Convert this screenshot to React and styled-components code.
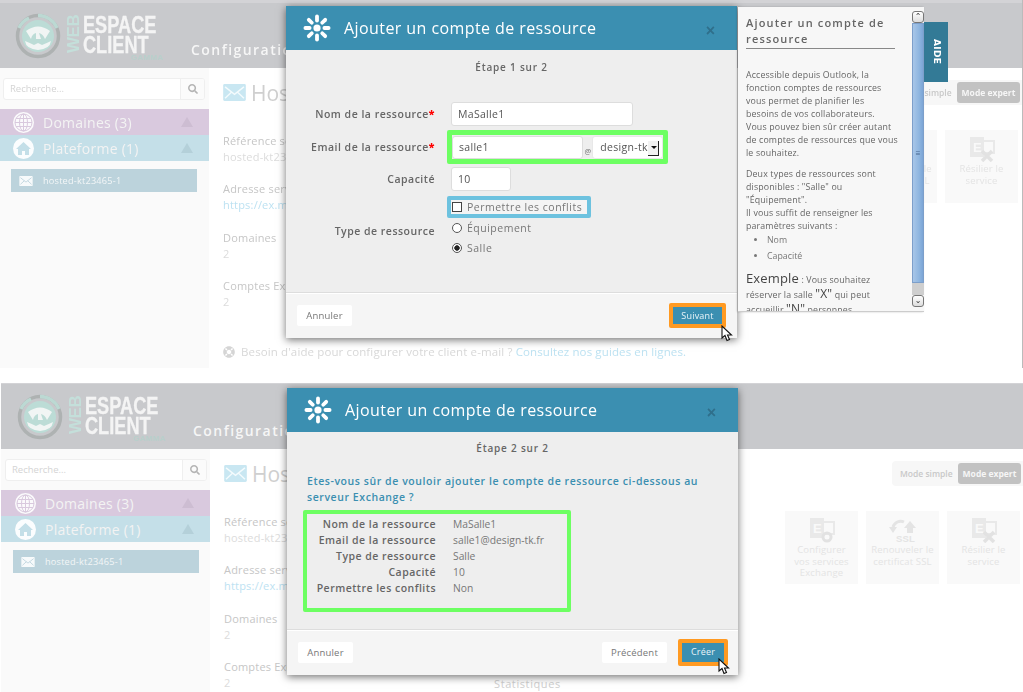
import React from 'react';
import styled, { createGlobalStyle } from 'styled-components';
import { FaSearch, FaLifeRing } from 'react-icons/fa';

const Global = createGlobalStyle`
  html, body { margin: 0; padding: 0; background: #fff; width: 1023px; height: 692px; overflow: hidden; }
  body { font-family: "Open Sans", "Noto Sans", sans-serif; }
  * { box-sizing: border-box; }
`;

const Page = styled.div`display: flex; flex-direction: column; gap: 15px; width: 1023px;`;
const Screen = styled.section`
  --shift: ${p => p.$shift}px;
  position: relative; overflow: hidden; width: 1023px; height: ${p => p.$h}px;
  padding-left: var(--shift); background: #fff; filter: blur(0.3px);
  display: flex; flex-direction: column;
  ${p => p.$edge ? 'border-right: 1px solid #bbb;' : ''}
`;
const Header = styled.header`
  flex: none; height: ${p => p.$strip + 65}px; border-top: ${p => p.$strip}px solid #d3d3d6;
  background: #c8c9cc; display: flex; align-items: flex-start; padding-left: calc(15px + var(--shift));
`;
const LogoMark = styled.svg`width: 46px; height: 46px; margin-top: 10px; flex: none;`;
const WebWord = styled.span`
  writing-mode: vertical-rl; transform: rotate(180deg); font: bold 17px/15px "Liberation Sans", sans-serif;
  color: #c4dfda; margin: 14px 2px 0 5px; height: 36px; text-align: center; letter-spacing: -0.5px;
`;
const Brand = styled.div`width: 108px; margin-top: 12px; flex: none;`;
const BrandLine = styled.div`
  font: bold 23px/20px "Liberation Sans", sans-serif; color: #f4f4f4; transform: scaleX(.79); transform-origin: left;
  white-space: nowrap; -webkit-text-stroke: .3px #f4f4f4;
`;
const Gamma = styled.div`font: bold 8px/8px "Liberation Sans", sans-serif; color: #b8cfcb; margin: -1px 0 0 48px; letter-spacing: .3px;`;
const PageTitle = styled.div`
  font-size: 14px; font-weight: 600; line-height: 20px; letter-spacing: 1.45px; color: #f6f6f6; margin: 37px 0 0 0; white-space: nowrap;
`;
const Body = styled.div`flex: 1; display: flex; min-height: 0;`;
const Sidebar = styled.aside`flex: none; width: 209px; background: #fafafa; padding-top: 10px;`;
const Search = styled.div`
  display: flex; height: 22px; width: 202px; margin: 0 0 9px calc(3px + var(--shift)); background: #fff;
  border: 1px solid #efefef; border-radius: 3px; overflow: hidden;
`;
const SearchText = styled.div`flex: 1; font-size: 9.5px; line-height: 20px; color: #d4d4d4; padding-left: 6px;`;
const SearchBtn = styled.div`
  width: 24px; border-left: 1px solid #efefef; background: #fbfbfb; color: #b5b5b5; font-size: 10px;
  display: flex; align-items: center; justify-content: center;
`;
const Category = styled.div`
  height: 26px; display: flex; align-items: center; background: ${p => p.$bg};
  padding-left: calc(13px + var(--shift)); color: #f3f3f3; font-size: 14px; letter-spacing: .25px;
`;
const CatIcon = styled.svg`width: 21px; height: 21px; margin-right: 9px; flex: none;`;
const CatLabel = styled.span`flex: 1;`;
const Tri = styled.span`
  width: 0; height: 0; border: 6.5px solid transparent; border-top: 0; border-bottom: 10px solid ${p => p.$c};
  margin-right: 16px;
`;
const SideItem = styled.div`
  display: flex; align-items: center; height: 23px; width: 186px; margin: 8px 0 0 calc(11px + var(--shift));
  background: #bcd3dc; padding-left: 8px; color: #f3f6f7; font-size: 9.2px; letter-spacing: .2px;
`;
const SideName = styled.span`margin-left: 10px;`;
const Env = styled.svg`width: ${p => p.$w}px; height: ${p => p.$h}px; flex: none;`;
const Main = styled.main`flex: 1; min-width: 0; padding: 12px 0 0 14px; display: flex; flex-direction: column;`;
const TopRow = styled.div`display: flex; align-items: center; justify-content: space-between; height: 25px;`;
const Heading = styled.h1`
  margin: 0; display: flex; align-items: center; gap: 5px; font-size: 21px; font-weight: 400; color: #cfcfcf; white-space: nowrap;
`;
const Toggle = styled.div`
  display: flex; align-items: center; height: 25px; width: 131px; background: #f7f7f7; border-radius: 4px 0 0 4px; padding: 0 2px 0 8px;
`;
const ToggleOff = styled.span`flex: 1; font-size: 8.5px; font-weight: 600; color: #c8c8c8; white-space: nowrap;`;
const ToggleOn = styled.span`
  width: 63px; height: 21px; background: #c2c2c2; color: #f6f6f6; border-radius: 3px; font-size: 8.5px; font-weight: 700;
  text-align: center; line-height: 21px; white-space: nowrap;
`;
const Content = styled.div`display: flex; margin-top: 25px;`;
const Info = styled.div`width: 270px; flex: none; padding-top: 3px;`;
const Field = styled.div`font-size: 11px; line-height: 16px; margin-bottom: 16.3px; white-space: nowrap; letter-spacing: .2px;`;
const FieldLabel = styled.div`color: #c6c6c6;`;
const FieldValue = styled.div`color: ${p => p.$link ? '#bde2f2' : '#dcdcdc'};`;
const Stats = styled.div`font-size: 11px; line-height: 16px; color: #cfcfcf; letter-spacing: .6px; padding-top: 165px;`;
const Actions = styled.div`display: flex; gap: 8px; margin: 0 calc(4px - var(--shift)) 0 auto; height: 73px;`;
const ActionCard = styled.div`
  width: 73px; height: 73px; background: #f9f9f9; display: flex; flex-direction: column; align-items: center;
  padding-top: 6px; font-size: 9.5px; line-height: 11.5px; color: #e4e4e4; text-align: center; letter-spacing: .15px;
`;
const ActionIcon = styled.svg`width: 28px; height: 26px; flex: none; margin-bottom: 1px;`;
const HelpLine = styled.div`
  display: flex; align-items: center; gap: 6px; margin-top: 18px; font-size: 11.5px; line-height: 16px; color: #d8d8d8; white-space: nowrap; letter-spacing: .12px;
`;
const HelpLink = styled.span`color: #bde2f2;`;

const Modal = styled.div`
  position: absolute; left: ${p => p.$x}px; top: ${p => p.$y}px; width: 451px; height: ${p => p.$h}px;
  display: flex; flex-direction: column; background: #eee; box-shadow: 0 2px 8px rgba(0,0,0,.55); font-size: 11px; color: #666;
`;
const ModalHead = styled.div`
  flex: none; height: 44px; background: #3b8fb1; display: flex; align-items: center; padding-left: 17px; color: #fff; position: relative;
`;
const Spark = styled.svg`width: 28px; height: 28px; margin-right: 13px; flex: none;`;
const ModalTitle = styled.div`font-size: 16px; line-height: 20px; letter-spacing: .42px; white-space: nowrap;`;
const Close = styled.span`position: absolute; right: 22px; top: 17px; font: bold 16px/16px "Liberation Sans", sans-serif; color: #2f6f8b;`;
const ModalBody = styled.div`flex: 1; padding-top: ${p => p.$top}px; min-height: 0;`;
const Step = styled.div`text-align: center; font-weight: 600; font-size: 10px; line-height: 16px; letter-spacing: .8px; color: #666;`;
const Form = styled.div`display: flex; flex-direction: column; margin-top: 27px;`;
const Row = styled.div`
  display: grid; grid-template-columns: 149px auto; column-gap: 12px; align-items: center; justify-content: start; margin-bottom: ${p => p.$mb}px;
`;
const Label = styled.label`
  text-align: right; font-weight: 600; font-size: 10.5px; letter-spacing: .5px; color: #666; white-space: nowrap;
  margin-top: ${p => p.$top || 0}px;
  b { color: #f00; }
`;
const Input = styled.div`
  width: ${p => p.$w}px; height: ${p => p.$h || 24}px; background: #fff; border: 1px solid #ddd; border-radius: 3px; margin-left: ${p => p.$ml ?? 4}px;
  font-size: 10.5px; line-height: ${p => (p.$h || 24) - 2}px; padding-left: 6px; color: #555; letter-spacing: .3px;
`;
const GreenBox = styled.div`
  display: flex; align-items: center; width: 221px; height: 34px; border: 5px solid #6dff62; border-radius: 2px;
`;
const At = styled.span`width: 9px; font-size: 7.5px; color: #777; text-align: center; padding-top: 7px;`;
const Select = styled.div`
  position: relative; width: 71px; height: 23px; background: #fff; border: 1px solid #e8e8e8; border-radius: 3px; padding-left: 7px;
  font-size: 10.5px; line-height: 21px; color: #555; overflow: hidden; white-space: nowrap; letter-spacing: .3px;
`;
const SelectArrow = styled.span`
  position: absolute; right: 3px; top: 4px; width: 11px; height: 15px; background: #f2f2f2;
  border-right: 1px solid #222; border-bottom: 1px solid #222;
  &::after { content: ""; position: absolute; left: 3px; top: 5px; border: 3px solid transparent; border-top: 3px solid #111; border-bottom: 0; }
`;
const Choices = styled.div`display: flex; flex-direction: column; align-items: flex-start;`;
const BlueBox = styled.div`
  display: flex; align-items: center; gap: 5px; width: 144px; height: 22px; border: 4px solid #6dc2df; border-radius: 2px; padding-left: 1px;
  background: #f4f4f4; font-size: 10.5px; color: #777; letter-spacing: .5px; white-space: nowrap;
`;
const Check = styled.span`width: 10px; height: 10px; background: #fff; border: 1px solid #444; flex: none;`;
const Radio = styled.div`
  display: flex; align-items: center; gap: 5px; height: 20px; margin-left: 5px; font-size: 10.5px; color: #777; letter-spacing: .5px;
`;
const Dot = styled.span`
  width: 10px; height: 10px; border-radius: 50%; background: ${p => p.$on ? 'radial-gradient(circle, #222 0 2.4px, #fff 3px)' : '#fff'};
  border: 1px solid #555; flex: none;
`;
const Question = styled.p`
  margin: 17px 20px 5px; font-size: 10.5px; font-weight: 600; line-height: 16px; letter-spacing: .57px; color: #3b8fb1;
`;
const Summary = styled.dl`
  margin: 0 0 0 16px; width: 268px; height: 102px; border: 4px solid #6dff62; border-radius: 2px; padding-top: 2px;
  display: grid; grid-template-columns: 129px 1fr; column-gap: 17px; grid-auto-rows: 16px; align-content: start;
`;
const Term = styled.dt`text-align: right; font-weight: 600; font-size: 10.5px; line-height: 16px; letter-spacing: .48px; color: #666; white-space: nowrap;`;
const Desc = styled.dd`margin: 0; font-size: 10.3px; line-height: 16px; color: #777; white-space: nowrap;`;
const Foot = styled.div`
  flex: none; height: 46px; border-top: 1px solid #ddd; background: #f5f5f5; display: flex; align-items: center; gap: 11px;
  padding: 0 14px 0 11px; box-shadow: inset 0 1px 0 #fff;
`;
const GhostBtn = styled.div`
  width: ${p => p.$w}px; height: 21px; background: #fff; border-radius: 2px; text-align: center; font-size: 9.5px; line-height: 21px; color: #777;
  letter-spacing: .2px; ${p => p.$push ? 'margin-left: auto;' : ''}
`;
const OrangeBox = styled.div`
  position: relative; border: 4px solid #ff9a22; border-radius: 2px; height: ${p => p.$h}px; width: ${p => p.$w}px; margin-left: ${p => p.$ml}; margin-right: ${p => p.$mr}px;
`;
const PrimaryBtn = styled.div`
  height: 100%; background: #3b8fb1; color: #eaf4f8; font-size: 9px; text-align: center; line-height: 17px; letter-spacing: .2px;
`;
const Cursor = styled.svg`position: absolute; width: 13px; height: 17px; left: ${p => p.$x}px; top: ${p => p.$y}px;`;

const HelpPanel = styled.div`
  position: absolute; left: 738px; top: 7px; width: 186px; height: 305px; background: #f7f7f7; border-bottom: 1px solid #ccc;
  display: flex; box-shadow: -1px 0 2px rgba(0,0,0,.2);
`;
const HelpScroll = styled.div`flex: 1; overflow: hidden; padding: 8px 0 0 8px; color: #666; font-size: 8.8px; line-height: 13px; white-space: nowrap;`;
const HelpTitle = styled.h2`
  margin: 0 0 20px; width: 149px; font-size: 11px; font-weight: 600; line-height: 16px; letter-spacing: 1.15px; color: #666; border-bottom: 1px solid #888; padding-bottom: 1px;
`;
const HelpPara = styled.p`margin: 0 0 8px; letter-spacing: .15px;`;
const HelpList = styled.ul`margin: -9px 0 8px; padding: 0 0 0 21px; li { line-height: 16px; color: #777; }`;
const Big = styled.span`font-size: ${p => p.$s}px; color: #444;`;
const Bar = styled.div`flex: none; width: 12px; margin-top: 4px; display: flex; flex-direction: column; height: 296px;`;
const BarBtn = styled.div`
  height: 12px; background: linear-gradient(#fff, #ddd); border: 1px solid #777; border-radius: 3px;
  font: 8px/9px "DejaVu Sans", sans-serif; color: #333; text-align: center;
`;
const BarThumb = styled.div`
  height: 260px; background: linear-gradient(90deg, #a8c6e8, #8fb6e0 60%, #7ca5d6); border: 1px solid #7d9fca; display: flex; align-items: center; justify-content: center;
  font-size: 8px; color: #48678f; line-height: 8px;
`;
const BarTrack = styled.div`flex: 1; background: #cfcfcf;`;
const AideTab = styled.div`
  position: absolute; left: 924px; top: 22px; width: 24px; height: 60px; background: #337a96; color: #fff;
  display: flex; align-items: center; justify-content: center; font: bold 9px/1 "DejaVu Sans", sans-serif; letter-spacing: .3px;
  writing-mode: vertical-rl;
`;

const Logo = () => (
  <LogoMark viewBox="0 0 46 46">
    <circle cx="23" cy="23" r="20.5" fill="none" stroke="#aeb2b2" strokeWidth="3.5" />
    <path d="M23 2.5 A20.5 20.5 0 0 1 42 15 M4 15 A20.5 20.5 0 0 1 14 5" fill="none" stroke="#bcd9d3" strokeWidth="3.5" />
    <circle cx="23" cy="23" r="16" fill="#bcdcd6" />
    <path d="M11 18 q12 -9 24 0 l-5 8 q-2 -5 -6 -6 l2 6 h-5 l0 -6 q-4 1 -5 6z" fill="#f1f5f4" />
    <path d="M10 28 q5 2 9 4 l4 -2 4 2 q5 -2 9 -4 q-1 8 -13 9 q-12 -1 -13 -9z" fill="#f1f5f4" />
  </LogoMark>
);
const Envelope = ({ w, h, bg, line = '#c5e6f2' }) => (
  <Env $w={w} $h={h} viewBox="0 0 24 18">
    <rect width="24" height="18" rx="1.5" fill={bg} />
    <path d="M2 3 L12 11 L22 3 M2 15 L9 8.5 M22 15 L15 8.5" fill="none" stroke={line} strokeWidth="1.5" />
  </Env>
);
const Globe = () => (
  <CatIcon viewBox="0 0 21 21">
    <circle cx="10.5" cy="10.5" r="10.5" fill="#fbfafc" />
    <g fill="none" stroke="#d9c9de" strokeWidth="1">
      <circle cx="10.5" cy="10.5" r="8.5" />
      <ellipse cx="10.5" cy="10.5" rx="4" ry="8.5" />
      <path d="M10.5 2v17M2 10.5h17M3 6.5h15M3 14.5h15" />
    </g>
  </CatIcon>
);
const House = () => (
  <CatIcon viewBox="0 0 21 21">
    <circle cx="10.5" cy="10.5" r="10.5" fill="#fbfdfe" />
    <path d="M3 11 L10.5 4 L18 11 L16 11 L16 17 L12 17 L12 13 L9 13 L9 17 L5 17 L5 11z" fill="#c4dfe8" />
  </CatIcon>
);
const ExIcon = ({ gear }) => (
  <ActionIcon viewBox="0 0 28 26">
    <rect x="2" y="1" width="14" height="20" fill="#e9e9e9" />
    <text x="5" y="16" fontSize="13" fontWeight="700" fill="#f9f9f9" fontFamily="Liberation Sans">E</text>
    <rect x="15" y="5" width="11" height="12" fill="none" stroke="#e9e9e9" strokeWidth="2" />
    {gear
      ? <circle cx="19" cy="20" r="4" fill="none" stroke="#e2e2e2" strokeWidth="3" />
      : <path d="M14 15 L24 25 M24 15 L14 25" stroke="#e2e2e2" strokeWidth="3.5" />}
  </ActionIcon>
);
const SslIcon = () => (
  <ActionIcon viewBox="0 0 28 26">
    <path d="M4 10 a8 8 0 0 1 11 -5" fill="none" stroke="#e4e4e4" strokeWidth="3" />
    <path d="M0 10 h8 l-4 6z" fill="#e4e4e4" />
    <path d="M21 4 l6 7 h-3 v5 h-6 v-5 h-3z" fill="#e4e4e4" />
    <text x="7" y="25" fontSize="9.5" fontWeight="700" fill="#e4e4e4" fontFamily="Liberation Sans">SSL</text>
  </ActionIcon>
);
const Sparkle = () => (
  <Spark viewBox="-14 -14 28 28">
    <circle r="3.6" fill="#fff" />
    {[0, 45, 90, 135, 180, 225, 270, 315].map(a => (
      <rect key={a} x="-1.9" y="-13.5" width="3.8" height="8" rx="1.9" fill="#fff" transform={`rotate(${a})`} />
    ))}
  </Spark>
);
const Pointer = ({ x, y }) => (
  <Cursor $x={x} $y={y} viewBox="0 0 13 17">
    <path d="M1 1 L1 13 L4 10.5 L6 15.5 L8.5 14.5 L6.5 10 L10.5 10z" fill="#fff" stroke="#111" strokeWidth="1.1" />
  </Cursor>
);

const PageShell = ({ strip }) => (
  <>
    <Header $strip={strip}>
      <Logo />
      <WebWord>WEB</WebWord>
      <Brand>
        <BrandLine>ESPACE</BrandLine>
        <BrandLine>CLIENT</BrandLine>
        <Gamma>GAMMA</Gamma>
      </Brand>
      <PageTitle>Configuration</PageTitle>
    </Header>
    <Body>
      <Sidebar>
        <Search>
          <SearchText>Recherche...</SearchText>
          <SearchBtn><FaSearch /></SearchBtn>
        </Search>
        <Category $bg="#d9c9de"><Globe /><CatLabel>Domaines (3)</CatLabel><Tri $c="#cdbdd2" /></Category>
        <Category $bg="#c4dfe8"><House /><CatLabel>Plateforme (1)</CatLabel><Tri $c="#b4d0d9" /></Category>
        <SideItem>
          <Envelope w={14} h={10} bg="#f7fafb" line="#bcd3dc" />
          <SideName>hosted-kt23465-1</SideName>
        </SideItem>
      </Sidebar>
      <Main>
        <TopRow>
          <Heading><Envelope w={23} h={17} bg="#c9e7f2" line="#f4fbfd" />Hosted Exchange</Heading>
          <Toggle><ToggleOff>Mode simple</ToggleOff><ToggleOn>Mode expert</ToggleOn></Toggle>
        </TopRow>
        <Content>
          <Info>
            <Field><FieldLabel>Référence service</FieldLabel><FieldValue>hosted-kt23465-1</FieldValue></Field>
            <Field><FieldLabel>Adresse serveur</FieldLabel><FieldValue $link>https://ex.mail.ovh.net</FieldValue></Field>
            <Field><FieldLabel>Domaines</FieldLabel><FieldValue>2</FieldValue></Field>
            <Field><FieldLabel>Comptes Exchange</FieldLabel><FieldValue>2</FieldValue></Field>
          </Info>
          <Stats>Statistiques</Stats>
          <Actions>
            <ActionCard><ExIcon gear />Configurer<br />vos services<br />Exchange</ActionCard>
            <ActionCard><SslIcon />Renouveler le<br />certificat SSL</ActionCard>
            <ActionCard><ExIcon />Résilier le<br />service</ActionCard>
          </Actions>
        </Content>
        <HelpLine>
          <FaLifeRing color="#d5d5d5" size={12} />
          <span>Besoin d'aide pour configurer votre client e-mail ? <HelpLink>Consultez nos guides en lignes.</HelpLink></span>
        </HelpLine>
      </Main>
    </Body>
  </>
);

const ModalHeader = () => (
  <ModalHead>
    <Sparkle />
    <ModalTitle>Ajouter un compte de ressource</ModalTitle>
    <Close>×</Close>
  </ModalHead>
);

export default function App() {
  return (
    <Page>
      <Global />
      <Screen $h={368} $shift={0} $edge>
        <PageShell strip={3} />
        <Modal $x={286} $y={6} $h={332}>
          <ModalHeader />
          <ModalBody $top={9}>
            <Step>Étape 1 sur 2</Step>
            <Form>
              <Row $mb={4}><Label>Nom de la ressource<b>*</b></Label><Input $w={182}>MaSalle1</Input></Row>
              <Row $mb={3}>
                <Label>Email de la ressource<b>*</b></Label>
                <GreenBox>
                  <Input $w={132} $h={23} $ml={0}>salle1</Input>
                  <At>@</At>
                  <Select>design-tk.fr<SelectArrow /></Select>
                </GreenBox>
              </Row>
              <Row $mb={5}><Label>Capacité</Label><Input $w={60}>10</Input></Row>
              <Row $mb={0}>
                <Label $top={8}>Type de ressource</Label>
                <Choices>
                  <BlueBox><Check />Permettre les conflits</BlueBox>
                  <Radio><Dot />Équipement</Radio>
                  <Radio><Dot $on />Salle</Radio>
                </Choices>
              </Row>
            </Form>
          </ModalBody>
          <Foot>
            <GhostBtn $w={55}>Annuler</GhostBtn>
            <OrangeBox $w={57} $h={25} $ml="auto" $mr={-3}><PrimaryBtn>Suivant</PrimaryBtn></OrangeBox>
          </Foot>
        </Modal>
        <HelpPanel>
          <HelpScroll>
            <HelpTitle>Ajouter un compte de<br />ressource</HelpTitle>
            <HelpPara>Accessible depuis Outlook, la<br />fonction comptes de ressources<br />vous permet de planifier les<br />besoins de vos collaborateurs.<br />Vous pouvez bien sûr créer autant<br />de comptes de ressources que vous<br />le souhaitez.</HelpPara>
            <HelpPara>Deux types de ressources sont<br />disponibles : "Salle" ou<br />"Équipement".<br />Il vous suffit de renseigner les<br />paramètres suivants :</HelpPara>
            <HelpList><li>Nom</li><li>Capacité</li></HelpList>
            <HelpPara><Big $s={13}>Exemple</Big> : Vous souhaitez<br />réserver la salle <Big $s={12}>"X"</Big> qui peut<br />accueillir <Big $s={12}>"N"</Big> personnes</HelpPara>
          </HelpScroll>
          <Bar>
            <BarBtn>⌃</BarBtn>
            <BarThumb>≡</BarThumb>
            <BarTrack />
            <BarBtn>⌄</BarBtn>
          </Bar>
        </HelpPanel>
        <AideTab>AIDE</AideTab>
        <Pointer x={721} y={325} />
      </Screen>
      <Screen $h={309} $shift={1}>
        <PageShell strip={1} />
        <Modal $x={287} $y={5} $h={287}>
          <ModalHeader />
          <ModalBody $top={8}>
            <Step>Étape 2 sur 2</Step>
            <Question>Etes-vous sûr de vouloir ajouter le compte de ressource ci-dessous au<br />serveur Exchange ?</Question>
            <Summary>
              <Term>Nom de la ressource</Term><Desc>MaSalle1</Desc>
              <Term>Email de la ressource</Term><Desc>salle1@design-tk.fr</Desc>
              <Term>Type de ressource</Term><Desc>Salle</Desc>
              <Term>Capacité</Term><Desc>10</Desc>
              <Term>Permettre les conflits</Term><Desc>Non</Desc>
            </Summary>
          </ModalBody>
          <Foot>
            <GhostBtn $w={55}>Annuler</GhostBtn>
            <GhostBtn $w={65} $push>Précédent</GhostBtn>
            <OrangeBox $w={50} $h={27} $ml="0" $mr={-4}><PrimaryBtn>Créer</PrimaryBtn></OrangeBox>
          </Foot>
        </Modal>
        <Pointer x={718} y={275} />
      </Screen>
    </Page>
  );
}
